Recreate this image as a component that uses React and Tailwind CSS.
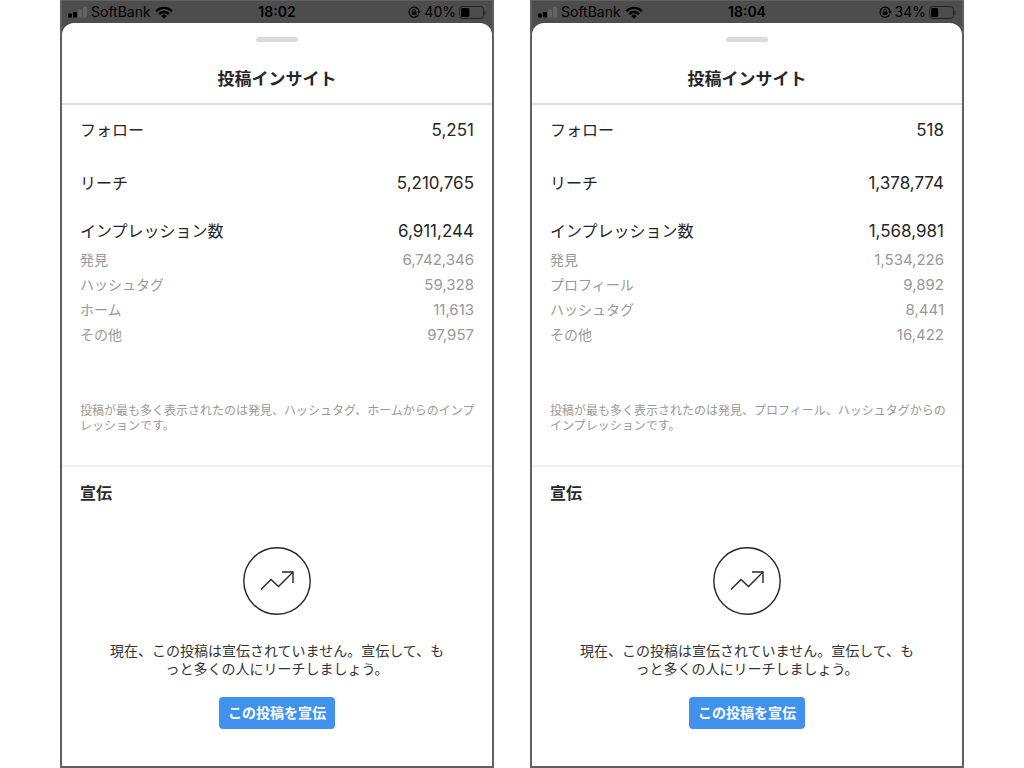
const PHONES = [
  {
    time: "18:02",
    battery: 40,
    totals: [
      { label: "フォロー", value: "5,251" },
      { label: "リーチ", value: "5,210,765" },
      { label: "インプレッション数", value: "6,911,244" },
    ],
    sources: [
      { label: "発見", value: "6,742,346" },
      { label: "ハッシュタグ", value: "59,328" },
      { label: "ホーム", value: "11,613" },
      { label: "その他", value: "97,957" },
    ],
    note: "投稿が最も多く表示されたのは発見、ハッシュタグ、ホームからのインプレッションです。",
  },
  {
    time: "18:04",
    battery: 34,
    totals: [
      { label: "フォロー", value: "518" },
      { label: "リーチ", value: "1,378,774" },
      { label: "インプレッション数", value: "1,568,981" },
    ],
    sources: [
      { label: "発見", value: "1,534,226" },
      { label: "プロフィール", value: "9,892" },
      { label: "ハッシュタグ", value: "8,441" },
      { label: "その他", value: "16,422" },
    ],
    note: "投稿が最も多く表示されたのは発見、プロフィール、ハッシュタグからのインプレッションです。",
  },
];

function SignalIcon() {
  return (
    <svg width="19" height="12" viewBox="0 0 19 12" aria-hidden="true">
      <rect x="0" y="7.5" width="4" height="4" rx="1" fill="#000" />
      <rect x="5" y="6" width="4" height="5.5" rx="1" fill="#000" />
      <rect x="10" y="3.5" width="4" height="8" rx="1" fill="#646464" />
      <rect x="15" y="1" width="4" height="10.5" rx="1" fill="#646464" />
    </svg>
  );
}

function WifiIcon() {
  return (
    <svg width="18" height="13" viewBox="0 0 18 13" fill="none" stroke="#000" strokeWidth="2.3" aria-hidden="true">
      <path d="M1.2 5.2a11 11 0 0 1 15.6 0" />
      <path d="M4 8.1a7 7 0 0 1 10 0" />
      <path d="M6.2 9.9a4 4 0 0 1 5.6 0L9 12.7z" fill="#000" stroke="none" />
    </svg>
  );
}

// 画面の向きロック
function RotationLockIcon() {
  return (
    <svg width="13" height="12" viewBox="0 0 13 12" fill="none" stroke="#000" aria-hidden="true">
      <path d="M10.6 8.4A5 5 0 1 1 11 5.2" strokeWidth="1.2" />
      <path d="M9.2 5.2h3.6L11 7.8z" fill="#000" stroke="none" />
      <rect x="3.8" y="5.4" width="4.6" height="3.3" rx="0.5" fill="#000" stroke="none" />
      <path d="M4.8 5.6V4.6a1.3 1.3 0 0 1 2.6 0v1" strokeWidth="0.9" />
    </svg>
  );
}

function BatteryIcon({ level }) {
  return (
    <svg width="27" height="13" viewBox="0 0 27 13" aria-hidden="true">
      <rect x="0.5" y="0.5" width="24" height="12" rx="3" fill="none" stroke="#222" />
      <rect x="2" y="2" width={(level / 100) * 21} height="9" rx="1.5" fill="#000" />
      <path d="M26 4.5v4" stroke="#222" strokeWidth="1" />
    </svg>
  );
}

function StatusBar({ time, battery }) {
  return (
    <div className="grid h-[22px] grid-cols-3 items-center px-1.5 text-sm leading-[22px] text-black">
      <div className="flex items-center gap-1">
        <SignalIcon />
        <span>SoftBank</span>
        <WifiIcon />
      </div>
      <div className="text-center font-semibold">{time}</div>
      <div className="flex items-center justify-end gap-[3px]">
        <RotationLockIcon />
        <span>{battery}%</span>
        <BatteryIcon level={battery} />
      </div>
    </div>
  );
}

function Row({ label, value }) {
  return (
    <div className="flex h-6 items-baseline justify-between text-[#262626]">
      <dt className="text-base leading-6">{label}</dt>
      <dd className="text-[17px] leading-6">{value}</dd>
    </div>
  );
}

function Phone({ phone }) {
  const [follow, reach, impressions] = phone.totals;
  return (
    <div className="flex flex-1 flex-col border-x-2 border-t border-b-2 border-[#606060] bg-[#4d4d4d]">
      <StatusBar time={phone.time} battery={phone.battery} />

      <div className="flex-1 rounded-t-xl bg-white">
        {/* ヘッダー */}
        <header className="border-b-2 border-[#e0e0e0] pt-[14px] pb-3">
          <div className="mx-auto h-[5px] w-[42px] rounded-full bg-[#dbdbdb]" />
          <h1 className="mt-[25px] text-center text-[17px] leading-6 font-semibold text-[#262626]">投稿インサイト</h1>
        </header>

        {/* 数値 */}
        <section className="border-b-2 border-[#f0f0f0] px-[18px] pt-[13px] pb-8">
          <dl>
            <Row label={follow.label} value={follow.value} />
            <div className="mt-[29px]"><Row label={reach.label} value={reach.value} /></div>
            <div className="mt-6"><Row label={impressions.label} value={impressions.value} /></div>
          </dl>
          <dl className="mt-1 text-[#999]">
            {phone.sources.map(source => (
              <div key={source.label} className="flex h-[25px] items-baseline justify-between">
                <dt className="text-sm leading-[25px]">{source.label}</dt>
                <dd className="text-[15px] leading-[25px]">{source.value}</dd>
              </div>
            ))}
          </dl>
          <p className="mt-14 -mr-1 text-xs leading-[15px] text-[#999] [line-break:anywhere]">{phone.note}</p>
        </section>

        {/* 宣伝 */}
        <section className="flex flex-col items-center px-[18px] pt-[14px]">
          <h2 className="self-start text-base leading-6 font-bold text-[#262626]">宣伝</h2>
          <svg className="mt-[42px]" width="68" height="68" viewBox="0 0 68 68" fill="none" stroke="#262626" strokeWidth="1.4" aria-hidden="true">
            <circle cx="34" cy="34" r="33.2" />
            <path d="M18 42.5l10-10 7.5 7L50 25" />
            <path d="M39 25h11v11" />
          </svg>
          <p className="mt-[27px] max-w-[340px] text-center text-sm leading-[18px] text-[#333] [line-break:anywhere]">
            現在、この投稿は宣伝されていません。宣伝して、もっと多くの人にリーチしましょう。
          </p>
          <button type="button" className="mt-[19px] h-8 rounded bg-[#4092ee] px-[9px] text-sm font-bold text-white">
            この投稿を宣伝
          </button>
        </section>
      </div>
    </div>
  );
}

export default function App() {
  return (
    <main lang="ja" className="flex min-h-screen gap-9 bg-white px-[60px] font-['Inter','Noto_Sans_CJK_JP',sans-serif]">
      {PHONES.map(phone => (
        <Phone key={phone.time} phone={phone} />
      ))}
    </main>
  );
}
